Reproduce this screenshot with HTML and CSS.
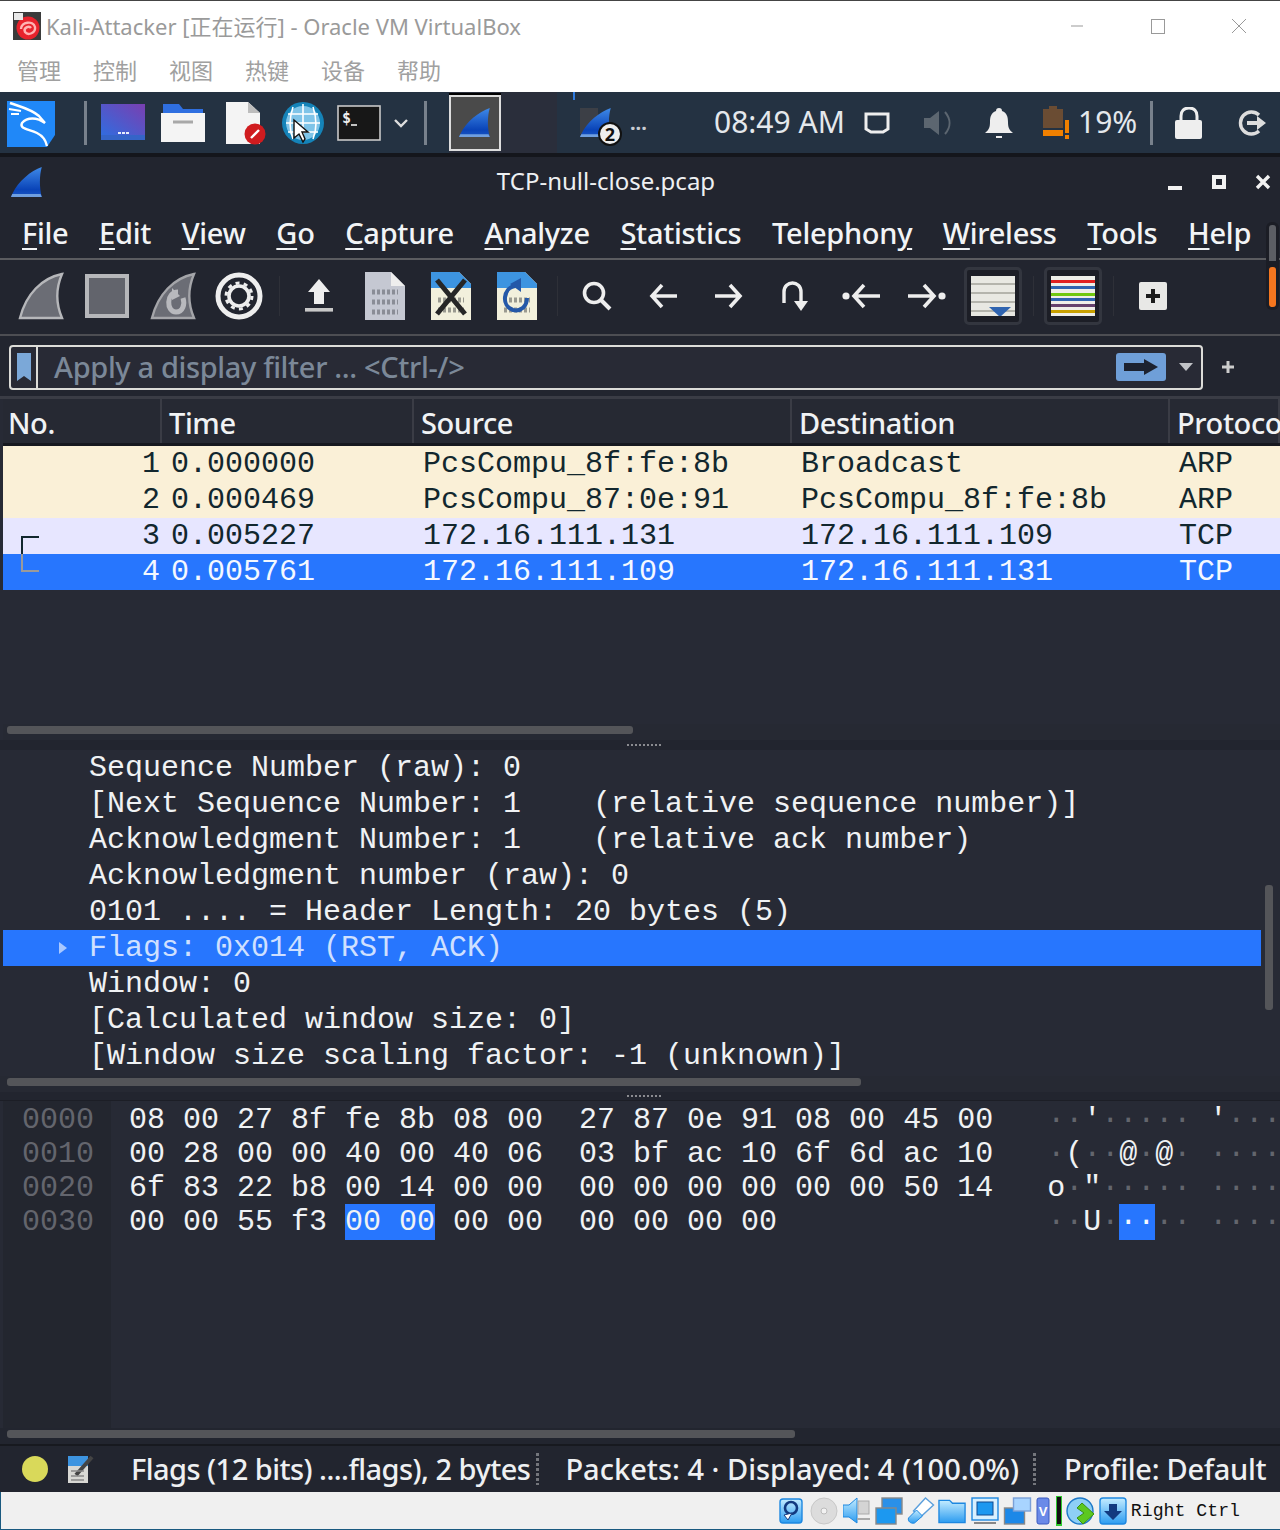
FILE: index.html

```html
<!DOCTYPE html>
<html lang="en">
<head>
    <meta charset="UTF-8">
    <meta name="viewport" content="width=device-width, initial-scale=1.0">
    <title>Kali-Attacker</title>
    <link rel="stylesheet" href="styles.css">
</head>
<body>
    <svg class="defs" width="0" height="0">
        <defs>
            <linearGradient id="finblue" x1="0" y1="0" x2="0" y2="1">
                <stop offset="0" stop-color="#3f8ae8"/>
                <stop offset="0.75" stop-color="#0a44b8"/>
                <stop offset="1" stop-color="#1a56c4"/>
            </linearGradient>
            <linearGradient id="vbblue" x1="0" y1="0" x2="0" y2="1">
                <stop offset="0" stop-color="#c4ecff"/>
                <stop offset="1" stop-color="#2c9cf0"/>
            </linearGradient>
            <symbol id="fin" viewBox="0 0 26 32" preserveAspectRatio="none">
                <path d="M25 1C16 5 6 15 1 28L0 31H25C23 21 23 10 25 1Z" fill="url(#finblue)"/>
                <path d="M1 28H24L25 31H0Z" fill="#6f9fe0"/>
            </symbol>
        </defs>
    </svg>

    <!-- virtualbox window -->
    <header class="vbox">
        <div class="vbox-title">
            <svg class="vbox-logo" width="28" height="28" viewBox="0 0 28 28">
                <rect width="28" height="28" fill="#3b3b3b"/>
                <circle cx="15" cy="16" r="11.5" fill="#e8222c"/>
                <path d="M8 17C8 10 20 8 22 15C23 21 15 24 12 20C10 16 16 13 18 16" fill="none" stroke="#ffb3b3" stroke-width="2.4"/>
                <rect x="1" y="1" width="9" height="7" fill="#e8e8e8"/>
            </svg>
            <span class="vbox-name">Kali-Attacker [正在运行] - Oracle VM VirtualBox</span>
            <div class="win-btns">
                <svg width="16" height="16" viewBox="0 0 16 16"><path d="M2 8H14" stroke="#999" stroke-width="1"/></svg>
                <svg width="16" height="16" viewBox="0 0 16 16"><rect x="1.5" y="1.5" width="13" height="14" fill="none" stroke="#999"/></svg>
                <svg width="16" height="16" viewBox="0 0 16 16"><path d="M1 1L15 15M15 1L1 15" stroke="#999"/></svg>
            </div>
        </div>
        <nav class="vbox-menu">
            <span>管理</span><span>控制</span><span>视图</span><span>热键</span><span>设备</span><span>帮助</span>
        </nav>
    </header>

    <!-- kali panel -->
    <section class="panel">
        <svg class="p-kali" width="48" height="48" viewBox="0 0 48 48">
            <path d="M0 2H48V36L40 48H0Z" fill="#2088f8"/>
            <path d="M3 4C14 8 24 10 32 17L38 24C30 18 20 18 15 24C12 30 22 30 30 34C36 37 39 42 40 47" fill="none" stroke="#fff" stroke-width="2.4"/>
            <path d="M2 10L14 12M4 15L12 15" stroke="#fff" stroke-width="2"/>
        </svg>
        <i class="p-sep p-sep-a"></i>
        <svg class="p-desk" width="44" height="37" viewBox="0 0 44 37">
            <defs><linearGradient id="desk" x1="0" y1="1" x2="1" y2="0"><stop offset="0" stop-color="#2f6de0"/><stop offset="1" stop-color="#7a3fb0"/></linearGradient></defs>
            <rect width="44" height="33" fill="url(#desk)"/>
            <rect y="31" width="44" height="5" fill="#3564c8"/>
            <path d="M17 29H29" stroke="#e8eefc" stroke-width="2" stroke-dasharray="3 1"/>
        </svg>
        <svg class="p-folder" width="44" height="40" viewBox="0 0 44 40">
            <path d="M2 10V1H18L22 6H42V12H2Z" fill="#2f6fe0"/>
            <rect y="10" width="44" height="29" fill="#f4f4f4"/>
            <path d="M12 19H32" stroke="#a8a8a8" stroke-width="3"/>
        </svg>
        <svg class="p-doc" width="40" height="44" viewBox="0 0 40 44">
            <path d="M0 1H22L34 12V43H0Z" fill="#f4f4f4"/>
            <path d="M22 1V12H34Z" fill="#bdbdbd"/>
            <circle cx="29" cy="33" r="10.5" fill="#d01c1f"/>
            <path d="M25 37L33 29" stroke="#fff" stroke-width="2.4"/>
        </svg>
        <svg class="p-web" width="44" height="44" viewBox="0 0 44 44">
            <circle cx="22" cy="22" r="21" fill="#1583b8"/>
            <circle cx="22" cy="22" r="17" fill="#7fc4e8"/>
            <path d="M5 22H39M7 13H37M7 31H37M22 3V41M12 6C8 18 8 28 12 38M32 6C36 18 36 28 32 38" stroke="#fff" stroke-width="1.6" fill="none"/>
            <path d="M13 19V37L18 33L22 41L24 38L21 31L27 31Z" fill="#fff" stroke="#111" stroke-width="1.4"/>
        </svg>
        <svg class="p-term" width="44" height="36" viewBox="0 0 44 36">
            <rect x="1" y="1" width="42" height="34" fill="#171717" stroke="#c8c8c8" stroke-width="1.6"/>
            <path d="M14 20H20" stroke="#eee" stroke-width="1.6"/>
            <text x="5" y="18" class="p-prompt">$</text>
        </svg>
        <svg class="p-chev" width="16" height="10" viewBox="0 0 16 10"><path d="M2 2L8 8L14 2" fill="none" stroke="#ddd" stroke-width="2.4"/></svg>
        <i class="p-sep p-sep-b"></i>
        <div class="p-task">
            <div class="p-task-on"><svg width="32" height="31"><use href="#fin"/></svg></div>
        </div>
        <div class="p-task2">
            <i class="p-mini"></i>
            <svg width="32" height="31"><use href="#fin"/></svg>
            <b class="p-count">2</b>
            <span class="p-more">...</span>
        </div>
        <span class="p-clock">08:49 AM</span>
        <svg class="p-mon" width="26" height="24" viewBox="0 0 26 24"><path d="M2 3H24V18L19 21H7L2 18Z" fill="none" stroke="#eee" stroke-width="3"/></svg>
        <svg class="p-vol" width="31" height="30" viewBox="0 0 31 30"><path d="M0 10H6L15 3V27L6 20H0Z" fill="#5c6670"/><path d="M21 4C27 11 27 19 21 26" fill="none" stroke="#5c6670" stroke-width="2"/></svg>
        <svg class="p-bell" width="28" height="32" viewBox="0 0 28 32"><path d="M14 1C16 1 17 2 17 4C22 6 23 10 23 15C23 20 24 23 28 26H0C4 23 5 20 5 15C5 10 6 6 11 4C11 2 12 1 14 1Z" fill="#eee"/><rect x="11" y="29" width="6" height="2" fill="#eee"/></svg>
        <svg class="p-batt" width="27" height="34" viewBox="0 0 27 34">
            <path d="M0 3H6V0H14V3H20V22H0Z" fill="#6a4c33"/>
            <rect y="24" width="20" height="6" fill="#f08000"/>
            <rect x="22" y="14" width="4" height="13" fill="#f08000"/>
            <rect x="22" y="29" width="4" height="4" fill="#f08000"/>
        </svg>
        <span class="p-pct">19%</span>
        <i class="p-sep p-sep-c"></i>
        <svg class="p-lock" width="28" height="32" viewBox="0 0 28 32"><path d="M6 14V9C6 4 9 1 14 1C19 1 22 4 22 9V14" fill="none" stroke="#eee" stroke-width="3"/><rect y="13" width="27" height="19" rx="2" fill="#eee"/></svg>
        <svg class="p-logout" width="32" height="28" viewBox="0 0 32 28"><path d="M23 6A11 11 0 1 0 23 22" fill="none" stroke="#ddd" stroke-width="3.4"/><path d="M11 12H21V7L30 14L21 21V16H11Z" fill="#ddd"/></svg>
    </section>

    <!-- wireshark window -->
    <main class="ws">
        <div class="ws-title">
            <svg width="32" height="32"><use href="#fin"/></svg>
            <span class="ws-file">TCP-null-close.pcap</span>
            <div class="ws-btns">
                <svg width="16" height="16" viewBox="0 0 16 16"><rect x="1" y="12" width="14" height="4" fill="#f2f2f2"/></svg>
                <svg width="16" height="16" viewBox="0 0 16 16"><path fill-rule="evenodd" d="M1 1H15V15H1ZM5 5V11H11V5Z" fill="#f2f2f2"/></svg>
                <svg width="16" height="16" viewBox="0 0 16 16"><path d="M2 2L14 14M14 2L2 14" stroke="#f2f2f2" stroke-width="3.4"/></svg>
            </div>
        </div>

        <nav class="ws-menu">
            <span><u>F</u>ile</span>
            <span><u>E</u>dit</span>
            <span><u>V</u>iew</span>
            <span><u>G</u>o</span>
            <span><u>C</u>apture</span>
            <span><u>A</u>nalyze</span>
            <span><u>S</u>tatistics</span>
            <span>Telephon<u>y</u></span>
            <span><u>W</u>ireless</span>
            <span><u>T</u>ools</span>
            <span><u>H</u>elp</span>
        </nav>

        <div class="tools">
            <div class="tool">
                <svg width="46" height="48" viewBox="0 0 46 48"><path d="M44 2C24 6 8 22 2 46H44C38 32 38 16 44 2Z" fill="#6b6d75" stroke="#b6b7ba" stroke-width="2.4"/></svg>
            </div>
            <div class="tool">
                <svg width="44" height="44" viewBox="0 0 44 44"><rect x="2" y="2" width="40" height="40" fill="#62646c" stroke="#b6b7ba" stroke-width="4"/></svg>
            </div>
            <div class="tool">
                <svg width="46" height="48" viewBox="0 0 46 48"><path d="M44 2C24 6 8 22 2 46H44C38 32 38 16 44 2Z" fill="#6b6d75" stroke="#a4a5a9" stroke-width="2.4"/><path d="M28 20C16 20 16 40 26 40C33 40 35 32 33 26" fill="none" stroke="#b8b9bd" stroke-width="5"/><path d="M22 16L30 24L22 28Z" fill="#b8b9bd"/></svg>
            </div>
            <div class="tool">
                <svg width="48" height="48" viewBox="0 0 48 48"><circle cx="24" cy="24" r="21" fill="none" stroke="#eee" stroke-width="5"/><circle cx="24" cy="24" r="10" fill="none" stroke="#eee" stroke-width="3.6"/><circle cx="24" cy="24" r="13" fill="none" stroke="#eee" stroke-width="3" stroke-dasharray="4 4.2"/></svg>
            </div>
            <i class="tool-sep"></i>
            <div class="tool">
                <svg width="28" height="34" viewBox="0 0 28 34"><path d="M14 0L25 13H19V25H9V13H3Z" fill="#eee"/><rect y="29" width="28" height="3.6" fill="#c8c8c8"/></svg>
            </div>
            <div class="tool">
                <svg width="40" height="48" viewBox="0 0 40 48"><path d="M0 0H26L40 14V48H0Z" fill="#c5c8d2"/><path d="M26 0L40 14H26Z" fill="#eee"/><path d="M7 20H33M7 30H33M7 40H33" stroke="#8a8d96" stroke-width="5" stroke-dasharray="3 2"/></svg>
            </div>
            <div class="tool">
                <svg width="40" height="48" viewBox="0 0 40 48"><path d="M0 0H28L40 12V48H0Z" fill="#f2f0dc"/><path d="M0 0H28L40 12V16H0Z" fill="#3d94e0"/><path d="M7 28H33M7 38H33" stroke="#9a9a90" stroke-width="5" stroke-dasharray="3 2"/><path d="M6 8L34 42M34 8L6 42" stroke="#262626" stroke-width="5"/></svg>
            </div>
            <div class="tool">
                <svg width="40" height="48" viewBox="0 0 40 48"><path d="M0 0H28L40 12V48H0Z" fill="#f2f0dc"/><path d="M0 0H28L40 12V16H0Z" fill="#3d94e0"/><path d="M7 28H33M7 38H33" stroke="#9a9a90" stroke-width="5" stroke-dasharray="3 2"/><path d="M18 14C6 16 4 34 16 38C24 40 30 34 30 26" fill="none" stroke="#2458a8" stroke-width="4"/><path d="M13 12L24 6L24 20Z" fill="#2458a8"/></svg>
            </div>
            <i class="tool-sep"></i>
            <div class="tool">
                <svg width="30" height="30" viewBox="0 0 30 30"><circle cx="12" cy="12" r="9.5" fill="none" stroke="#eee" stroke-width="3.6"/><path d="M19 19L28 28" stroke="#eee" stroke-width="4"/></svg>
            </div>
            <div class="tool">
                <svg width="28" height="26" viewBox="0 0 28 26"><path d="M13 2L3 13L13 24M3 13H28" fill="none" stroke="#eee" stroke-width="3.6"/></svg>
            </div>
            <div class="tool">
                <svg width="28" height="26" viewBox="0 0 28 26"><path d="M15 2L25 13L15 24M25 13H0" fill="none" stroke="#eee" stroke-width="3.6"/></svg>
            </div>
            <div class="tool">
                <svg width="28" height="30" viewBox="0 0 28 30"><path d="M3 22V11C3 -1 20 -1 20 11V22" fill="none" stroke="#eee" stroke-width="3.4"/><path d="M13 20H27L20 30Z" fill="#eee"/></svg>
            </div>
            <div class="tool">
                <svg width="38" height="26" viewBox="0 0 38 26"><circle cx="4" cy="13" r="3.6" fill="#eee"/><path d="M22 2L12 13L22 24M12 13H38" fill="none" stroke="#eee" stroke-width="3.6"/></svg>
            </div>
            <div class="tool">
                <svg width="38" height="26" viewBox="0 0 38 26"><circle cx="34" cy="13" r="3.6" fill="#eee"/><path d="M16 2L26 13L16 24M26 13H0" fill="none" stroke="#eee" stroke-width="3.6"/></svg>
            </div>
            <div class="tool">
                <div class="tool-on">
                    <svg width="44" height="40" viewBox="0 0 44 40">
                        <rect width="44" height="40" fill="#e8e8e2"/>
                        <path d="M0 8H44M0 17H44M0 26H44M0 35H44" stroke="#b4b4ac" stroke-width="2"/>
                        <path d="M18 31H40L29 41Z" fill="#2f64b0"/>
                    </svg>
                </div>
            </div>
            <i class="tool-sep"></i>
            <div class="tool">
                <div class="tool-on">
                    <svg width="44" height="40" viewBox="0 0 44 40">
                        <rect width="44" height="40" fill="#eeeee8"/>
                        <rect y="4" width="44" height="3" fill="#e02020"/>
                        <rect y="10" width="44" height="3" fill="#2f64b0"/>
                        <rect y="17" width="44" height="3" fill="#70c810"/>
                        <rect y="22" width="44" height="3" fill="#2f64b0"/>
                        <rect y="28" width="44" height="3" fill="#64406c"/>
                        <rect y="34" width="44" height="3" fill="#c8a000"/>
                    </svg>
                </div>
            </div>
            <i class="tool-sep"></i>
            <div class="tool">
                <svg width="28" height="28" viewBox="0 0 28 28"><rect width="28" height="28" rx="2" fill="#e8e8e6"/><path d="M14 7V21M7 14H21" stroke="#1c1c1c" stroke-width="4"/></svg>
            </div>
            <div class="edge">
                <i class="edge-grey"></i>
                <i class="edge-orange"></i>
            </div>
        </div>

        <div class="filter">
            <div class="filter-box">
                <div class="filter-mark">
                    <svg width="14" height="28" viewBox="0 0 14 28"><path d="M0 0H14V28L7 23L0 28Z" fill="#7ba8d8"/></svg>
                </div>
                <span class="filter-text">Apply a display filter ... &lt;Ctrl-/&gt;</span>
                <div class="filter-go">
                    <svg width="34" height="16" viewBox="0 0 34 16"><path d="M0 4H20V0L34 8L20 16V12H0Z" fill="#1c2230"/></svg>
                </div>
                <svg class="filter-drop" width="14" height="8" viewBox="0 0 14 8"><path d="M0 0H14L7 8Z" fill="#c0c2c6"/></svg>
            </div>
            <svg class="filter-plus" width="12" height="12" viewBox="0 0 12 12"><path d="M6 0V12M0 6H12" stroke="#ccc" stroke-width="3"/></svg>
        </div>

        <section class="packets">
            <div class="p-head">
                <div>No.</div>
                <div>Time</div>
                <div>Source</div>
                <div>Destination</div>
                <div>Protocol</div>
            </div>
            <div class="p-row arp"><span class="num">1</span><span>0.000000</span><span>PcsCompu_8f:fe:8b</span><span>Broadcast</span><span>ARP</span></div>
            <div class="p-row arp"><span class="num">2</span><span>0.000469</span><span>PcsCompu_87:0e:91</span><span>PcsCompu_8f:fe:8b</span><span>ARP</span></div>
            <div class="p-row tcp"><i class="conn conn-top"></i><span class="num">3</span><span>0.005227</span><span>172.16.111.131</span><span>172.16.111.109</span><span>TCP</span></div>
            <div class="p-row sel"><i class="conn conn-end"></i><span class="num">4</span><span>0.005761</span><span>172.16.111.109</span><span>172.16.111.131</span><span>TCP</span></div>
            <div class="fill"></div>
            <div class="hbar"><i class="thumb thumb-a"></i></div>
        </section>

        <div class="split"></div>

        <section class="tree">
            <div class="tree-row">Sequence Number (raw): 0</div>
            <div class="tree-row">[Next Sequence Number: 1    (relative sequence number)]</div>
            <div class="tree-row">Acknowledgment Number: 1    (relative ack number)</div>
            <div class="tree-row">Acknowledgment number (raw): 0</div>
            <div class="tree-row">0101 .... = Header Length: 20 bytes (5)</div>
            <div class="tree-row tree-sel"><svg class="arrow" width="8" height="12" viewBox="0 0 8 12"><path d="M0 0L8 6L0 12Z" fill="#a9c8ff"/></svg>Flags: 0x014 (RST, ACK)</div>
            <div class="tree-row">Window: 0</div>
            <div class="tree-row">[Calculated window size: 0]</div>
            <div class="tree-row">[Window size scaling factor: -1 (unknown)]</div>
            <i class="vthumb"></i>
        </section>
        <div class="hbar hbar-tree"><i class="thumb thumb-b"></i></div>

        <div class="split split-b"></div>

        <section class="hex">
            <div class="hex-off">0000<br>0010<br>0020<br>0030</div>
            <div class="hex-main">
                <div>08 00 27 8f fe 8b 08 00  27 87 0e 91 08 00 45 00   <i>··</i>'<i>·····</i> '<i>···</i></div>
                <div>00 28 00 00 40 00 40 06  03 bf ac 10 6f 6d ac 10   <i>·</i>(<i>··</i>@<i>·</i>@<i>·</i> <i>····</i></div>
                <div>6f 83 22 b8 00 14 00 00  00 00 00 00 00 00 50 14   o<i>·</i>"<i>·····</i> <i>····</i></div>
                <div>00 00 55 f3 <b>00 00</b> 00 00  00 00 00 00               <i>··</i>U<i>·</i><b><i>··</i></b><i>··</i> <i>····</i></div>
            </div>
        </section>
        <div class="hbar hbar-hex"><i class="thumb thumb-c"></i></div>

        <footer class="status">
            <i class="s-dot"></i>
            <svg class="s-note" width="26" height="28" viewBox="0 0 26 28">
                <rect y="3" width="20" height="25" fill="#d8d8d4"/>
                <rect width="20" height="10" y="1" fill="#3d94e0"/>
                <path d="M8 20L24 2" stroke="#444" stroke-width="4"/>
                <path d="M3 16H16M3 21H16M3 25H16" stroke="#888" stroke-width="1.4"/>
            </svg>
            <span class="s-a">Flags (12 bits) ....flags), 2 bytes</span>
            <i class="s-grip"></i>
            <span>Packets: 4 · Displayed: 4 (100.0%)</span>
            <i class="s-grip s-grip-b"></i>
            <span class="s-c">Profile: Default</span>
        </footer>
    </main>

    <!-- virtualbox status icons -->
    <footer class="vbar">
        <svg width="24" height="26" viewBox="0 0 24 26"><rect x="1" y="1" width="22" height="24" rx="3" fill="url(#vbblue)" stroke="#1e88e0" stroke-width="1.4"/><circle cx="12" cy="10" r="6" fill="none" stroke="#123a80" stroke-width="2.6"/><path d="M5 17L13 15L9 22Z" fill="#fff" stroke="#123a80"/></svg>
        <svg class="v-cd" width="28" height="28" viewBox="0 0 28 28"><circle cx="14" cy="14" r="13" fill="#dcdcdc" stroke="#c8c8c8"/><circle cx="14" cy="14" r="3" fill="#f2f2f2" stroke="#bbb"/></svg>
        <svg class="v-audio" width="29" height="28" viewBox="0 0 29 28"><path d="M0 8H6L14 1V26L6 20H0Z" fill="url(#vbblue)" stroke="#1e88e0"/><rect x="15" y="4" width="11" height="13" fill="#d4d4d4" stroke="#aaa"/><path d="M14 22H27" stroke="#aaa" stroke-width="2"/></svg>
        <svg width="28" height="28" viewBox="0 0 28 28"><rect x="7" y="1" width="20" height="16" fill="#2a90e8" stroke="#888" stroke-width="1.4"/><rect x="1" y="11" width="20" height="16" fill="#1c98f0" stroke="#888" stroke-width="1.4"/></svg>
        <svg width="29" height="28" viewBox="0 0 28 28"><path d="M19 1L27 8L14 20L7 14Z" fill="#fff" stroke="#5a9fdc" stroke-width="1.4"/><path d="M10 13L16 19L8 26C4 27 1 24 2 21Z" fill="url(#vbblue)" stroke="#1e88e0"/></svg>
        <svg width="29" height="26" viewBox="0 0 30 26"><path d="M1 25V2H12L15 5H28V25Z" fill="url(#vbblue)" stroke="#1e88e0" stroke-width="1.4"/></svg>
        <svg class="v-disp" width="28" height="28" viewBox="0 0 28 28"><rect x="1" y="1" width="26" height="22" fill="#d8f0ff" stroke="#1e88e0" stroke-width="1.4"/><rect x="6" y="5" width="16" height="13" fill="#1c98f0" stroke="#104a90"/><path d="M3 26H25" stroke="#888" stroke-width="2"/></svg>
        <svg class="v-disp" width="29" height="28" viewBox="0 0 28 28"><rect x="1" y="11" width="20" height="16" fill="#1c88e8" stroke="#888" stroke-width="1.4"/><rect x="10" y="1" width="17" height="13" fill="#a8d4ff" stroke="#7aa0d8" stroke-width="1.4"/></svg>
        <svg class="v-chip" width="14" height="28" viewBox="0 0 14 28"><rect x="1" y="1" width="12" height="26" rx="2" fill="#6a8ae8" stroke="#3a5ac0"/><text x="7" y="19" class="v-v">V</text></svg>
        <i class="v-bar"></i>
        <svg class="v-round" width="30" height="28" viewBox="0 0 30 28"><ellipse cx="14" cy="14" rx="13" ry="13" fill="#8ecff5" stroke="#1e78c8" stroke-width="1.4"/><path d="M16 6L28 17L17 27L11 21L18 16L11 11Z" fill="#5cc820" stroke="#3a9010"/></svg>
        <svg width="28" height="28" viewBox="0 0 28 28"><rect x="1" y="1" width="26" height="26" rx="3" fill="url(#vbblue)" stroke="#1e88e0" stroke-width="1.4"/><path d="M10 7H18V14H23L14 23L5 14H10Z" fill="#123a80"/></svg>
        <span class="v-key">Right Ctrl</span>
    </footer>
</body>
</html>
```

FILE: styles.css

```css
* {
    margin: 0;
    padding: 0;
    box-sizing: border-box;
}

i {
    font-style: normal;
    display: block;
}

body {
    width: 1280px;
    height: 1530px;
    overflow: hidden;
    background: #272a35;
    font-family: "Noto Sans", "Noto Sans CJK SC", sans-serif;
}

.defs {
    position: absolute;
}

/* virtualbox window */
.vbox {
    height: 92px;
    background: #fff;
    border-top: 1px solid #444;
}

.vbox-title {
    height: 51px;
    display: flex;
    align-items: center;
    padding: 0 0 2px 13px;
}

.vbox-logo {
    margin-right: 5px;
}

.vbox-name {
    font-size: 22px;
    color: #9a9a9a;
    padding-bottom: 2px;
}

.win-btns {
    margin-left: auto;
    display: flex;
    gap: 65px;
    padding-right: 33px;
}

.vbox-menu {
    height: 40px;
    display: flex;
    align-items: center;
    gap: 32px;
    padding: 0 0 7px 17px;
    font-size: 22px;
    color: #a0a0a0;
    font-family: "Noto Sans CJK SC", sans-serif;
}

/* kali panel */
.panel {
    height: 61px;
    background: #243242;
    display: flex;
    align-items: center;
    color: #eee;
    padding-left: 7px;
}

.panel svg {
    flex: none;
}

.p-sep {
    width: 3px;
    height: 44px;
    background: #78818c;
    flex: none;
}

.p-sep-a {
    margin: 0 14px 0 29px;
}

.p-desk {
    margin-right: 16px;
}

.p-folder {
    margin-right: 21px;
}

.p-doc {
    margin-right: 15px;
}

.p-web {
    margin-right: 12px;
}

.p-prompt {
    font: 700 15px "DejaVu Sans Mono", monospace;
    fill: #eee;
}

.p-chev {
    margin-left: 12px;
}

.p-sep-b {
    margin: 0 22px 0 15px;
}

.p-task {
    width: 108px;
    height: 61px;
    background: #2a2e3b;
    display: flex;
    align-items: center;
    flex: none;
    margin-right: 16px;
}

.p-task-on {
    width: 52px;
    height: 56px;
    background: #4a4a4a;
    border: 2px solid #ddd;
    box-shadow: 0 -2px 0 #000;
    display: flex;
    align-items: center;
    justify-content: center;
}

.p-task2 {
    width: 141px;
    height: 61px;
    display: flex;
    align-items: center;
    padding-left: 7px;
    position: relative;
    flex: none;
}

.p-task2::before {
    content: "";
    position: absolute;
    left: 0;
    top: 0;
    width: 2px;
    height: 8px;
    background: #2f7be0;
}

.p-mini {
    position: absolute;
    left: 7px;
    top: 16px;
    width: 18px;
    height: 26px;
    background: #3c3f46;
}

.p-task2 svg {
    position: relative;
}

.p-count {
    position: absolute;
    left: 25px;
    top: 30px;
    width: 24px;
    height: 24px;
    border-radius: 50%;
    background: #eee;
    border: 2px solid #111;
    color: #111;
    font-size: 18px;
    line-height: 20px;
    text-align: center;
}

.p-more {
    font-size: 20px;
    font-weight: 700;
    color: #c8ccd2;
    margin-left: 18px;
}

.p-clock {
    font-size: 30px;
    width: 150px;
    color: #e4e8ec;
    flex: none;
    padding-bottom: 3px;
}

.p-mon {
    margin-right: 34px;
}

.p-vol {
    margin-right: 30px;
}

.p-bell {
    margin-right: 30px;
}

.p-batt {
    margin-right: 8px;
}

.p-pct {
    font-size: 30px;
    width: 72px;
    color: #e4e8ec;
    flex: none;
    padding-bottom: 3px;
}

.p-sep-c {
    margin-right: 22px;
}

.p-lock {
    margin-right: 33px;
}

/* wireshark */
.ws {
    height: 1339px;
    background: #272a35;
    border-top: 4px solid #14161c;
    display: flex;
    flex-direction: column;
}

.ws-title {
    height: 50px;
    background: #22252f;
    display: flex;
    align-items: center;
    padding-left: 11px;
    position: relative;
}

.ws-file {
    position: absolute;
    left: 0;
    right: 68px;
    top: 7px;
    text-align: center;
    font-size: 24px;
    color: #eef0f2;
}

.ws-btns {
    margin-left: auto;
    display: flex;
    gap: 28px;
    padding-right: 9px;
}

.ws-menu {
    height: 53px;
    background: #22252f;
    border-bottom: 2px solid #5b5c60;
    display: flex;
    align-items: center;
    gap: 30.7px;
    padding-left: 22px;
    font-size: 29px;
    font-weight: 500;
    letter-spacing: -0.3px;
    color: #f2f4f6;
}

.ws-menu u {
    text-underline-offset: 4px;
}

.tools {
    height: 76px;
    background: #22252f;
    border-bottom: 2px solid #4d4e53;
    display: flex;
    align-items: center;
    padding: 0 0 2px 8px;
    position: relative;
}

.tool {
    width: 66px;
    height: 64px;
    display: flex;
    align-items: center;
    justify-content: center;
    flex: none;
}

.tool-sep {
    width: 14px;
    height: 40px;
    flex: none;
    background: linear-gradient(#2e3038, #2e3038) center / 1px 100% no-repeat;
}

.tool-on {
    width: 58px;
    height: 58px;
    border: 3px solid #33363f;
    border-radius: 5px;
    background: #1c1e26;
    display: flex;
    align-items: center;
    justify-content: center;
}

/* scroll marks at the right edge of the guest desktop */
.edge {
    position: absolute;
    left: 1266px;
    top: -38px;
    width: 13px;
    height: 88px;
    padding: 3px;
    background: #1b1d25;
    border-radius: 6px;
}

.edge-grey {
    height: 36px;
    background: #5c5e64;
    border-radius: 3px 3px 0 0;
}

.edge-orange {
    height: 40px;
    margin-top: 6px;
    background: #f5761f;
    border-radius: 3px;
}

.filter {
    height: 63px;
    background: #22252f;
    display: flex;
    align-items: center;
    padding: 2px 0 0 9px;
    border-bottom: 3px solid #3a3c45;
}

.filter-box {
    width: 1194px;
    height: 45px;
    background: #282a35;
    border: 2px solid #dcdcd8;
    border-radius: 4px;
    display: flex;
    align-items: center;
}

.filter-mark {
    width: 27px;
    height: 41px;
    border-right: 2px solid #dcdcd8;
    display: flex;
    align-items: center;
    justify-content: center;
}

.filter-text {
    margin-left: 16px;
    padding-bottom: 2px;
    font-size: 29px;
    font-weight: 500;
    letter-spacing: -0.36px;
    color: #7b8898;
}

.filter-go {
    margin-left: auto;
    width: 50px;
    height: 28px;
    background: #6f9fd8;
    border-radius: 3px;
    display: flex;
    align-items: center;
    justify-content: center;
}

.filter-drop {
    margin: 0 8px 0 13px;
}

.filter-plus {
    margin-left: 19px;
}

/* packet list */
.packets {
    height: 341px;
    display: flex;
    flex-direction: column;
    padding-left: 3px;
}

.p-head,
.p-row {
    display: grid;
    grid-template-columns: 159px 252px 378px 378px 110px;
    position: relative;
}

.p-head {
    height: 47px;
    background: #262933;
    border-bottom: 3px solid #16181f;
    font-size: 29px;
    font-weight: 500;
    letter-spacing: -0.4px;
    color: #f0f2f4;
    line-height: 48px;
    overflow: hidden;
    white-space: nowrap;
}

.p-head div {
    padding-left: 7px;
    border-right: 2px solid #3a3c45;
}

.p-head div:first-child {
    padding-left: 5px;
}

.p-row,
.tree-row,
.hex {
    font-family: "Liberation Mono", monospace;
    font-size: 30px;
}

.p-row {
    height: 36px;
    padding-top: 1px;
    line-height: 35px;
    color: #12272e;
    white-space: nowrap;
}

.p-row span {
    padding-left: 9px;
}

.p-row span.num {
    padding: 0 2px 0 0;
    text-align: right;
}

.arp {
    background: #faf0d7;
}

.tcp {
    background: #e7e6ff;
}

.sel {
    background: #2776fe;
    color: #f4f8ff;
}

.conn {
    position: absolute;
    left: 18px;
    width: 18px;
    height: 18px;
    border-left: 2px solid #12272e;
}

.conn-top {
    top: 18px;
    border-top: 2px solid #12272e;
}

.conn-end {
    top: 0;
    border-left-color: #9a9a9a;
    border-bottom: 2px solid #9a9a9a;
}

.fill {
    flex: 1;
}

.hbar {
    height: 16px;
    padding: 2px 4px 6px;
    background: #262933;
    flex: none;
}

.thumb {
    height: 8px;
    background: #545559;
    border-radius: 3px;
}

.thumb-a {
    width: 626px;
}

.thumb-b {
    width: 854px;
}

.thumb-c {
    width: 788px;
}

.split {
    height: 10px;
    background: #22252f;
    flex: none;
    position: relative;
}

.split::after {
    content: "";
    position: absolute;
    left: 627px;
    top: 4px;
    width: 34px;
    height: 2px;
    background: repeating-linear-gradient(90deg, #8a8b90 0 2px, transparent 2px 4px);
}

.split-b {
    height: 8px;
}

.split-b::after {
    top: 3px;
}

/* details */
.tree {
    height: 326px;
    padding-left: 3px;
    position: relative;
    flex: none;
}

.tree-row {
    height: 36px;
    padding-top: 1px;
    line-height: 35px;
    padding-left: 86px;
    color: #f0f2f4;
    white-space: pre;
    width: 1258px;
    position: relative;
}

.tree-sel {
    background: #2776fe;
    color: #cfe0ff;
}

.arrow {
    position: absolute;
    left: 56px;
    top: 12px;
}

.vthumb {
    position: absolute;
    left: 1265px;
    top: 135px;
    width: 8px;
    height: 125px;
    background: #545559;
    border-radius: 3px;
}

.hbar-tree {
    padding-left: 7px;
}

/* hex dump */
.hex {
    height: 328px;
    display: flex;
    flex: none;
    line-height: 34px;
    overflow: hidden;
    padding-left: 3px;
    background: #272a35;
    border-top: 1px solid #1c1e26;
}

.hex-off {
    width: 108px;
    padding: 2px 0 0 19px;
    color: #63656d;
    background: #23262f;
    flex: none;
}

.hex-main {
    padding: 2px 0 0 18px;
    color: #f0f2f4;
}

.hex-main div {
    height: 34px;
    white-space: pre;
}

.hex-main i {
    display: inline;
    color: #63656d;
}

.hex-main b {
    font-weight: 400;
    background: #2776fe;
    padding: 1px 0;
}

.hex-main b i {
    color: #f4f8ff;
}

.hbar-hex {
    background: #22252f;
    padding-left: 7px;
}

/* status bar */
.status {
    height: 48px;
    background: #22252f;
    border-top: 2px solid #17191f;
    display: flex;
    align-items: center;
    font-size: 29px;
    font-weight: 500;
    color: #eef0f2;
    white-space: nowrap;
    padding-left: 22px;
}

.status span {
    padding-bottom: 2px;
}

.s-dot {
    width: 26px;
    height: 26px;
    border-radius: 50%;
    background: #d9d95a;
}

.s-note {
    margin: 0 37px 0 20px;
}

.s-a {
    letter-spacing: -0.54px;
}

.s-c {
    letter-spacing: -0.3px;
}

.s-grip {
    width: 3px;
    height: 32px;
    margin: 0 26px 0 6px;
    background: repeating-linear-gradient(180deg, #74767c 0 3px, transparent 3px 5px);
}

.s-grip-b {
    margin: 0 28px 0 14px;
}

/* bottom bar */
.vbar {
    height: 38px;
    background: #f0f0f0;
    border-bottom: 1px solid #1a5a80;
    border-left: 1px solid #1a5a80;
    display: flex;
    align-items: center;
    justify-content: flex-end;
    gap: 3px;
    padding-right: 40px;
}

.v-cd {
    margin-left: 4px;
}

.v-audio {
    margin-left: 2px;
}

.v-disp {
    margin-left: 1px;
}

.v-chip {
    margin-left: 1px;
}

.v-v {
    font: 700 13px "Liberation Sans", sans-serif;
    fill: #fff;
    text-anchor: middle;
}

.v-bar {
    width: 6px;
    height: 30px;
    background: #111;
    border: 1px solid #2fc82f;
    border-bottom-width: 2px;
    margin-left: 3px;
}

.v-round {
    margin-left: 1px;
}

.v-key {
    margin-left: 1px;
    font-family: "Liberation Mono", monospace;
    font-size: 18.2px;
    color: #111;
}
```
